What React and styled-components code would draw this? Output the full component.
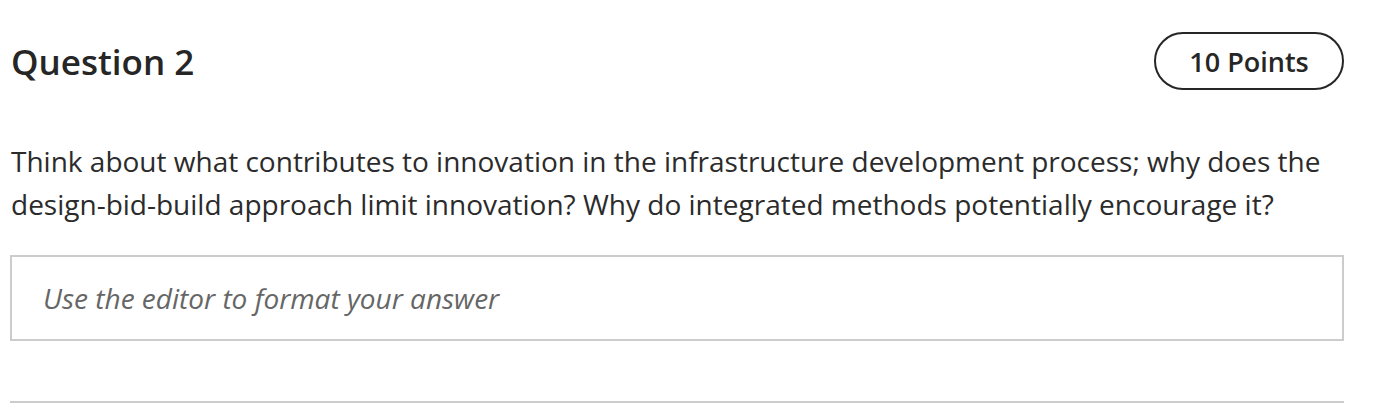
import styled, { createGlobalStyle } from "styled-components";

const GlobalStyle = createGlobalStyle`
  body {
    margin: 0;
    background: #ffffff;
    font-family: "Open Sans", "Liberation Sans", sans-serif;
    color: #2d3b45;
  }
`

const Page = styled.div`
  width: 1334px;
  padding: 32px 0 0 10px;
`

const Header = styled.div`
  display: flex;
  align-items: center;
  justify-content: space-between;
`

const Title = styled.h2`
  margin: 0;
  font-size: 35px;
  font-weight: 600;
  color: #262626;
  padding-left: 1px;
`

const PointsPill = styled.div`
  box-sizing: border-box;
  width: 190px;
  height: 58px;
  border: 2px solid #262626;
  border-radius: 29px;
  display: flex;
  align-items: center;
  justify-content: center;
  font-size: 27px;
  font-weight: 600;
  color: #262626;
`

const Prompt = styled.p`
  margin: 50px 0 0 1px;
  font-size: 28px;
  line-height: 43px;
  color: #2b2b2b;
`

const Editor = styled.div`
  box-sizing: border-box;
  margin-top: 29px;
  height: 86px;
  border: 2px solid #cccccc;
  display: flex;
  align-items: center;
  padding-left: 31px;
  font-size: 28px;
  font-style: italic;
  color: #666666;
`

const Divider = styled.hr`
  margin: 60px 0 0 0;
  border: none;
  height: 2px;
  background: #cccccc;
`

export default function App() {
  return (
    <>
      <GlobalStyle />
      <Page>
        <Header>
          <Title>Question 2</Title>
          <PointsPill>10 Points</PointsPill>
        </Header>
        <Prompt>
          Think about what contributes to innovation in the infrastructure development process; why does the design-bid-build approach limit innovation? Why do integrated methods potentially encourage it?
        </Prompt>
        <Editor>Use the editor to format your answer</Editor>
        <Divider />
      </Page>
    </>
  )
}
